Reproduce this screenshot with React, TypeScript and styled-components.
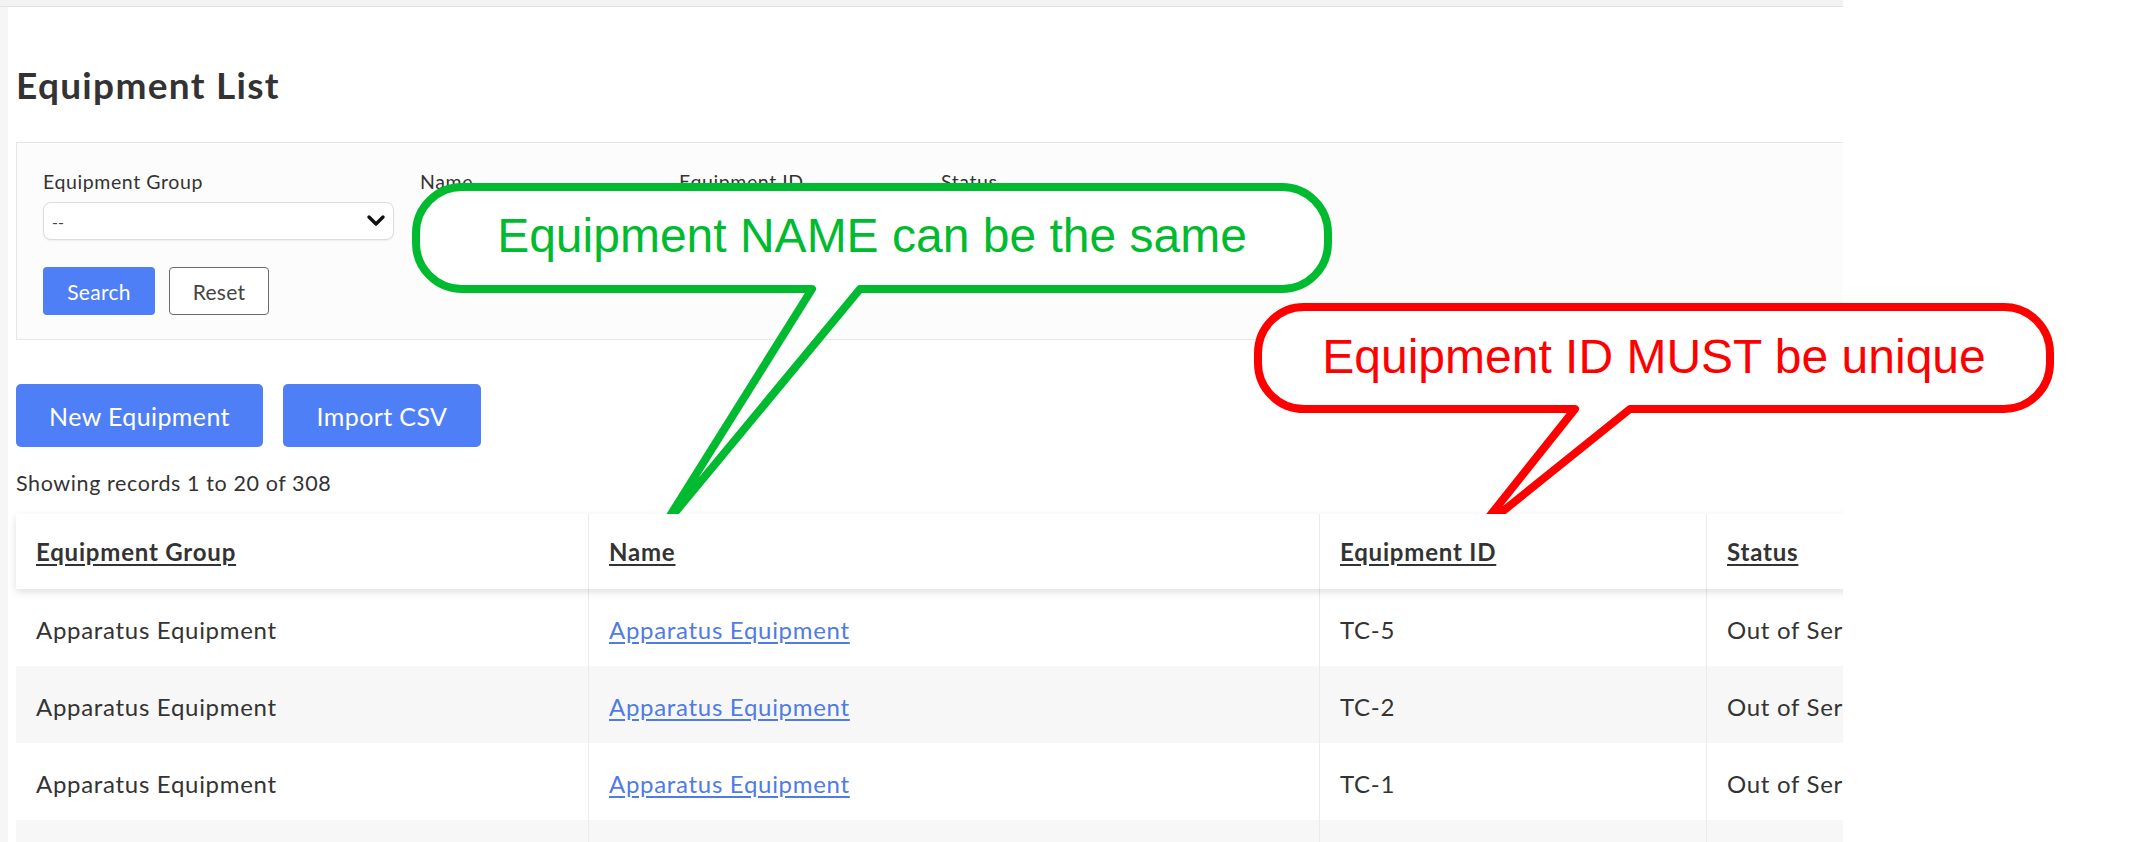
import React from 'react';
import styled, { createGlobalStyle } from 'styled-components';

const GlobalStyle = createGlobalStyle`
  html, body {
    margin: 0;
    padding: 0;
    background: #ffffff;
  }
  body {
    font-family: Lato, 'Noto Sans', sans-serif;
    color: #333333;
  }
`;

const Canvas = styled.div`
  position: relative;
  width: 2156px;
  height: 842px;
  overflow: hidden;
  background: #ffffff;
`;

const Shot = styled.div`
  width: 1843px;
  height: 842px;
  overflow: hidden;
  display: flex;
  flex-direction: column;
`;

const TopBar = styled.div`
  height: 6px;
  flex: none;
  background: #f3f3f3;
  border-bottom: 1px solid #e2e2e2;
`;

const Body = styled.div`
  flex: 1;
  display: flex;
  min-height: 0;
`;

const LeftRail = styled.div`
  width: 8px;
  flex: none;
  background: #f6f6f6;
`;

const Main = styled.main`
  flex: 1;
  min-width: 0;
  padding-left: 8px;
  display: flex;
  flex-direction: column;
`;

const Title = styled.h1`
  margin: 58px 0 0 0;
  font-size: 37px;
  line-height: 40px;
  letter-spacing: 1.3px;
  font-weight: 700;
  color: #333333;
`;

const FilterPanel = styled.section`
  margin-top: 37px;
  width: 1900px;
  padding: 28px 0 24px 26px;
  background: #fcfcfc;
  border: 1px solid #e6e6e6;
`;

const FieldRow = styled.div`
  display: flex;
  gap: 26px;
`;

const Field = styled.div<{ $w: number }>`
  width: ${(p) => p.$w}px;
  display: flex;
  flex-direction: column;
`;

const Label = styled.label`
  font-size: 19.5px;
  line-height: 22px;
  letter-spacing: 0.6px;
  color: #333333;
  white-space: nowrap;
`;

const SelectWrap = styled.div`
  position: relative;
  margin-top: 9px;
`;

const Select = styled.div`
  height: 38px;
  box-sizing: border-box;
  border: 1px solid #dcdcdc;
  border-radius: 8px;
  background: #ffffff;
  box-shadow: 0 1px 2px rgba(0, 0, 0, 0.06);
  padding-left: 8px;
  display: flex;
  align-items: center;
  font-size: 16px;
  color: #444444;
`;

const Chevron = styled.svg`
  position: absolute;
  right: 8px;
  top: 10px;
  width: 20px;
  height: 18px;
`;

const Input = styled.div`
  margin-top: 9px;
  height: 38px;
  box-sizing: border-box;
  border: 1px solid #dcdcdc;
  border-radius: 8px;
  background: #ffffff;
`;

const ButtonRow = styled.div`
  margin-top: 27px;
  display: flex;
  gap: 14px;
`;

const SmallButton = styled.button<{ $primary?: boolean }>`
  height: 48px;
  width: ${(p) => (p.$primary ? 112 : 100)}px;
  box-sizing: border-box;
  border-radius: 4px;
  font-family: Lato, sans-serif;
  font-size: 21px;
  letter-spacing: 0.3px;
  cursor: pointer;
  background: ${(p) => (p.$primary ? '#4f7ff6' : '#ffffff')};
  color: ${(p) => (p.$primary ? '#ffffff' : '#444444')};
  border: ${(p) => (p.$primary ? 'none' : '1.5px solid #6b6b6b')};
`;

const Actions = styled.div`
  margin-top: 44px;
  display: flex;
  gap: 20px;
`;

const BigButton = styled.button<{ $w: number }>`
  width: ${(p) => p.$w}px;
  height: 63px;
  border: none;
  border-radius: 5px;
  background: #4f7ff6;
  color: #ffffff;
  font-family: Lato, sans-serif;
  font-size: 25px;
  letter-spacing: 0.4px;
  cursor: pointer;
`;

const Showing = styled.div`
  margin-top: 24px;
  font-size: 21.5px;
  line-height: 24px;
  letter-spacing: 0.6px;
  color: #333333;
`;

const Table = styled.div`
  margin-top: 19px;
  width: 2100px;
  display: flex;
  flex-direction: column;
`;

const cols = '572px 731px 387px 410px';

const HeadRow = styled.div`
  display: grid;
  grid-template-columns: ${cols};
  height: 75px;
  background: #ffffff;
  box-shadow: 0 3px 8px rgba(0, 0, 0, 0.13);
  position: relative;
  z-index: 1;
`;

const Row = styled.div<{ $alt: boolean }>`
  display: grid;
  grid-template-columns: ${cols};
  height: 77px;
  background: ${(p) => (p.$alt ? '#f7f7f7' : '#ffffff')};
`;

const Cell = styled.div<{ $first?: boolean }>`
  display: flex;
  align-items: center;
  padding: 4px 0 0 20px;
  font-size: 24px;
  letter-spacing: 0.7px;
  color: #333333;
  white-space: nowrap;
  overflow: hidden;
  border-left: ${(p) => (p.$first ? 'none' : '1px solid #ebebeb')};
`;

const HeadCell = styled(Cell)`
  padding-top: 0;
  font-weight: 700;
  letter-spacing: 0.8px;
  text-decoration: underline;
  text-underline-offset: 3px;
`;

const Link = styled.a`
  color: #4f7be6;
  text-decoration: underline;
  text-underline-offset: 3px;
`;

const Overlay = styled.svg`
  position: absolute;
  left: 0;
  top: 0;
  width: 2156px;
  height: 842px;
  pointer-events: none;
`;

const CalloutText = styled.text`
  font-family: 'Liberation Sans', Arial, sans-serif;
  font-size: 48px;
`;

const rows = [
  { group: 'Apparatus Equipment', name: 'Apparatus Equipment', id: 'TC-5', status: 'Out of Service' },
  { group: 'Apparatus Equipment', name: 'Apparatus Equipment', id: 'TC-2', status: 'Out of Service' },
  { group: 'Apparatus Equipment', name: 'Apparatus Equipment', id: 'TC-1', status: 'Out of Service' },
  { group: 'Apparatus Equipment', name: 'Apparatus Equipment', id: 'TC-3', status: 'Out of Service' },
];

// rounded bubble with a tail leaving the bottom edge
const bubblePath = (
  x1: number, y1: number, x2: number, y2: number, r: number,
  tailL: number, tailR: number, tipX: number, tipY: number,
) =>
  `M ${x1 + r} ${y1} H ${x2 - r} A ${r} ${r} 0 0 1 ${x2} ${y1 + r} V ${y2 - r} ` +
  `A ${r} ${r} 0 0 1 ${x2 - r} ${y2} H ${tailR} L ${tipX} ${tipY} L ${tailL} ${y2} ` +
  `H ${x1 + r} A ${r} ${r} 0 0 1 ${x1} ${y2 - r} V ${y1 + r} A ${r} ${r} 0 0 1 ${x1 + r} ${y1} Z`;

const App = () => {
  return (
    <>
      <GlobalStyle />
      <Canvas>
        <Shot>
          <TopBar />
          <Body>
            <LeftRail />
            <Main>
              <Title>Equipment List</Title>
              <FilterPanel>
                <FieldRow>
                  <Field $w={351}>
                    <Label>Equipment Group</Label>
                    <SelectWrap>
                      <Select>--</Select>
                      <Chevron viewBox="0 0 20 18">
                        <path d="M3 5 L10 12 L17 5" fill="none" stroke="#111" strokeWidth="3.4" strokeLinecap="round" strokeLinejoin="round" />
                      </Chevron>
                    </SelectWrap>
                  </Field>
                  <Field $w={233}>
                    <Label>Name</Label>
                    <Input />
                  </Field>
                  <Field $w={236}>
                    <Label>Equipment ID</Label>
                    <Input />
                  </Field>
                  <Field $w={236}>
                    <Label>Status</Label>
                    <Input />
                  </Field>
                </FieldRow>
                <ButtonRow>
                  <SmallButton $primary>Search</SmallButton>
                  <SmallButton>Reset</SmallButton>
                </ButtonRow>
              </FilterPanel>
              <Actions>
                <BigButton $w={247}>New Equipment</BigButton>
                <BigButton $w={198}>Import CSV</BigButton>
              </Actions>
              <Showing>Showing records 1 to 20 of 308</Showing>
              <Table>
                <HeadRow>
                  <HeadCell $first>Equipment Group</HeadCell>
                  <HeadCell>Name</HeadCell>
                  <HeadCell>Equipment ID</HeadCell>
                  <HeadCell>Status</HeadCell>
                </HeadRow>
                {rows.map((r, i) => (
                  <Row key={i} $alt={i % 2 === 1}>
                    <Cell $first>{r.group}</Cell>
                    <Cell>
                      <Link href="#">{r.name}</Link>
                    </Cell>
                    <Cell>{r.id}</Cell>
                    <Cell>{r.status}</Cell>
                  </Row>
                ))}
              </Table>
            </Main>
          </Body>
        </Shot>
        <Overlay viewBox="0 0 2156 842">
          <path
            d={bubblePath(416, 187, 1328, 289, 46, 812, 860, 663, 527)}
            fill="#ffffff"
            stroke="#00bb2f"
            strokeWidth="8"
            strokeLinejoin="round"
          />
          <CalloutText x="872" y="252" textAnchor="middle" fill="#00bb2f">
            Equipment NAME can be the same
          </CalloutText>
          <path
            d={bubblePath(1258, 307, 2050, 409, 46, 1575, 1630, 1477, 532)}
            fill="#ffffff"
            stroke="#ff0000"
            strokeWidth="8"
            strokeLinejoin="round"
          />
          <CalloutText x="1654" y="373" textAnchor="middle" fill="#ff0000">
            Equipment ID MUST be unique
          </CalloutText>
        </Overlay>
      </Canvas>
    </>
  );
};

export default App;
